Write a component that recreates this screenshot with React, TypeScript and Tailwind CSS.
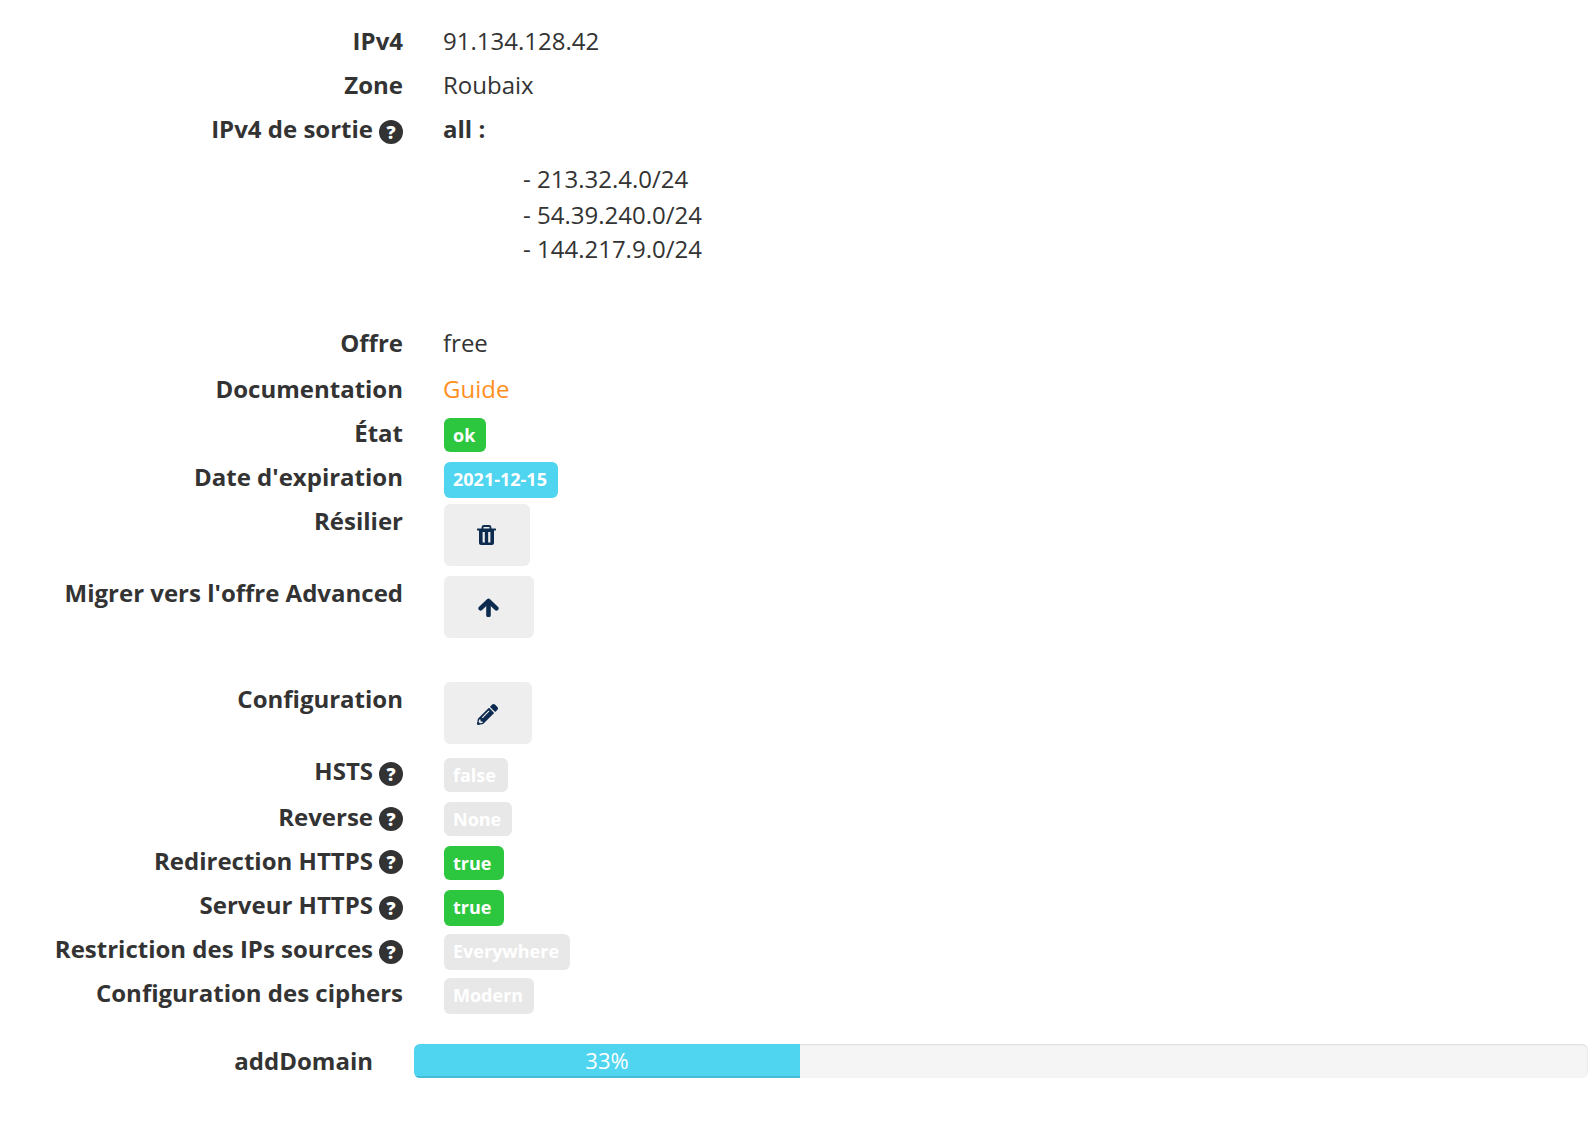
import React from "react";
import { FaPencilAlt } from "react-icons/fa";

function Help({ className = "align-baseline" }: { className?: string }) {
  return (
    <span className={`ml-[6px] inline-block h-6 w-6 rounded-full bg-[#333333] text-center text-[18px] font-extrabold leading-6 text-white ${className}`}>
      ?
    </span>
  );
}

function TrashIcon() {
  return (
    <svg width="19" height="20" viewBox="0 0 19 20" fill="none" aria-hidden="true">
      <path d="M5.5 4V2.2C5.5 1.5 6.2 1 7 1h5c.8 0 1.5.5 1.5 1.2V4" stroke="currentColor" strokeWidth="1.8" />
      <rect x="0" y="3.4" width="19" height="2" rx="0.5" fill="currentColor" />
      <path d="M2 5h15v13c0 1.1-.9 2-2 2H4c-1.1 0-2-.9-2-2V5z" fill="currentColor" />
      <rect x="5.6" y="7" width="2.2" height="10.5" fill="#eeeeee" />
      <rect x="11.2" y="7" width="2.2" height="10.5" fill="#eeeeee" />
    </svg>
  );
}

function ArrowIcon() {
  return (
    <svg width="21" height="19" viewBox="0 0 21 19" fill="none" aria-hidden="true">
      <path d="M2.6 10.4 10.5 2.8l7.9 7.6" stroke="currentColor" strokeWidth="4.4" strokeLinecap="round" strokeLinejoin="round" />
      <path d="M10.5 4v13" stroke="currentColor" strokeWidth="4.6" strokeLinecap="round" />
    </svg>
  );
}

function Row({ label, help, height, labelClass = "", children }: { label: string; help?: React.ReactNode; height: string; labelClass?: string; children?: React.ReactNode }) {
  return (
    <div className={`flex ${height}`}>
      <div className={`w-[403px] shrink-0 text-right font-bold ${labelClass}`}>
        {label}
        {help}
      </div>
      <div className="ml-[41px] min-w-0 flex-1">{children}</div>
    </div>
  );
}

function Badge({ color, children, className = "" }: { color: string; children: React.ReactNode; className?: string }) {
  return (
    <span className={`block w-fit rounded-md pl-[9px] pr-[11px] text-[18px] font-bold leading-[34px] text-white ${color} ${className}`}>
      {children}
    </span>
  );
}

function IconButton({ width, className = "", children }: { width: string; className?: string; children: React.ReactNode }) {
  return (
    <div className={`flex h-[62px] items-center justify-center rounded-md bg-[#eeeeee] pr-[2px] text-[#0d2b4e] ${width} ${className}`}>{children}</div>
  );
}

export default function App() {
  return (
    <div className="min-h-[1132px] bg-white pt-[24px] font-['Open_Sans',sans-serif] text-[24px] leading-[34px] text-[#333333]">
      <Row label="IPv4" height="h-[44px]"><div className="-ml-px">91.134.128.42</div></Row>
      <Row label="Zone" height="h-[44px]"><div className="-ml-px">Roubaix</div></Row>
      <Row label="IPv4 de sortie" help={<Help className="align-[-1px]" />} height="h-[214px]">
        <div className="-ml-px font-bold">all :</div>
        <div className="mt-[14px] pl-[79px] leading-[34px]">
          <div className="leading-[38px]">- 213.32.4.0/24</div>
          <div>- 54.39.240.0/24</div>
          <div>- 144.217.9.0/24</div>
        </div>
      </Row>
      <Row label="Offre" height="h-[46px]"><div className="-ml-px">free</div></Row>
      <Row label="Documentation" height="h-[44px]"><div className="-ml-px text-[#ff8f1f]">Guide</div></Row>
      <Row label="État" height="h-[44px]"><Badge color="bg-[#2dc63f]" className="mt-[2px]">ok</Badge></Row>
      <Row label="Date d'expiration" height="h-[44px]"><Badge color="bg-[#4fd5f0]" className="mt-[2px] h-[36px]">2021-12-15</Badge></Row>
      <Row label="Résilier" height="h-[72px]">
        <IconButton width="w-[86px]"><TrashIcon /></IconButton>
      </Row>
      <Row label="Migrer vers l'offre Advanced" height="h-[106px]">
        <IconButton width="w-[90px]"><ArrowIcon /></IconButton>
      </Row>
      <Row label="Configuration" height="h-[72px]">
        <IconButton width="w-[88px]" className="pt-[2px]"><FaPencilAlt className="h-[21px] w-[21px]" /></IconButton>
      </Row>
      <Row label="HSTS" help={<Help className="align-[-1px]" />} height="h-[46px]"><Badge color="bg-[#e8e8e8]" className="mt-[4px] pr-[12px]">false</Badge></Row>
      <Row label="Reverse" help={<Help />} height="h-[44px]"><Badge color="bg-[#e8e8e8]" className="mt-[2px] pr-[11px]">None</Badge></Row>
      <Row label="Redirection HTTPS" help={<Help className="align-[1px]" />} height="h-[44px]"><Badge color="bg-[#2dc63f]" className="mt-[2px] pr-[13px]">true</Badge></Row>
      <Row label="Serveur HTTPS" help={<Help className="align-[-1px]" />} height="h-[44px]"><Badge color="bg-[#2dc63f]" className="mt-[2px] h-[36px] pr-[13px]">true</Badge></Row>
      <Row label="Restriction des IPs sources" help={<Help className="align-[-1px]" />} height="h-[44px]"><Badge color="bg-[#e8e8e8]" className="mt-[2px] h-[36px]">Everywhere</Badge></Row>
      <Row label="Configuration des ciphers" height="h-[68px]"><Badge color="bg-[#e8e8e8]" className="mt-[2px] h-[36px]">Modern</Badge></Row>
      <div className="flex h-[34px] items-center">
        <div className="w-[373px] shrink-0 text-right font-bold">addDomain</div>
        <div className="ml-[41px] h-[34px] w-[1174px] overflow-hidden rounded-md bg-[#f5f5f5] shadow-[inset_0_1px_2px_rgba(0,0,0,0.1)]">
          <div className="h-full w-[386px] border-b-2 border-[#44bcd6] bg-[#4fd5f0] text-center text-[22px] leading-[33px] text-white">33%</div>
        </div>
      </div>
    </div>
  );
}
